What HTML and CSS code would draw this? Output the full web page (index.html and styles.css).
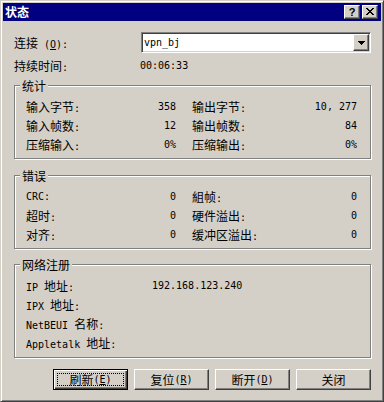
FILE: index.html
```html
<!DOCTYPE html>
<html lang="zh-CN">
<head>
<meta charset="utf-8">
<title>状态</title>
<link rel="stylesheet" href="styles.css">
</head>
<body>
<div class="window">
  <div class="titlebar">
    <span class="title">状态</span>
    <div class="tbtns">
      <span class="tbtn raised help">?</span>
      <span class="tbtn raised close">
        <svg width="8" height="7" viewBox="0 0 8 7" shape-rendering="crispEdges">
          <path d="M0 0h2v1H0zM6 0h2v1H6zM1 1h2v1H1zM5 1h2v1H5zM2 2h4v1H2zM3 3h2v1H3zM2 4h4v1H2zM1 5h2v1H1zM5 5h2v1H5zM0 6h2v1H0zM6 6h2v1H6z" fill="#000"/>
        </svg>
      </span>
    </div>
  </div>
  <div class="content">
    <div class="row conn">
      <span class="lbl">连接<span class="a"> (<u>O</u>):</span></span>
      <div class="combo">
        <span class="combo-text a">vpn_bj</span>
        <span class="drop raised">
          <svg width="7" height="4" viewBox="0 0 7 4" shape-rendering="crispEdges">
            <path d="M0 0h7v1H0zM1 1h5v1H1zM2 2h3v1H2zM3 3h1v1H3z" fill="#000"/>
          </svg>
        </span>
      </div>
    </div>
    <div class="row dur">
      <span class="lbl lbl-dur">持续时间<span class="a">:</span></span>
      <span class="a">00:06:33</span>
    </div>

    <fieldset class="group g1">
      <legend>统计</legend>
      <div class="grid">
        <div class="cell"><span>输入字节<span class="a">:</span></span><span class="a">358</span></div>
        <div class="cell"><span>输出字节<span class="a">:</span></span><span class="a">10, 277</span></div>
        <div class="cell"><span>输入帧数<span class="a">:</span></span><span class="a">12</span></div>
        <div class="cell"><span>输出帧数<span class="a">:</span></span><span class="a">84</span></div>
        <div class="cell"><span>压缩输入<span class="a">:</span></span><span class="a">0%</span></div>
        <div class="cell"><span>压缩输出<span class="a">:</span></span><span class="a">0%</span></div>
      </div>
    </fieldset>

    <fieldset class="group g2">
      <legend>错误</legend>
      <div class="grid">
        <div class="cell"><span class="a">CRC:</span><span class="a">0</span></div>
        <div class="cell"><span>組帧<span class="a">:</span></span><span class="a">0</span></div>
        <div class="cell"><span>超时<span class="a">:</span></span><span class="a">0</span></div>
        <div class="cell"><span>硬件溢出<span class="a">:</span></span><span class="a">0</span></div>
        <div class="cell"><span>对齐<span class="a">:</span></span><span class="a">0</span></div>
        <div class="cell"><span>缓冲区溢出<span class="a">:</span></span><span class="a">0</span></div>
      </div>
    </fieldset>

    <fieldset class="group g3">
      <legend>网络注册</legend>
      <div class="net">
        <div class="nrow"><span class="nlbl"><span class="a">IP </span>地址<span class="a">:</span></span><span class="a">192.168.123.240</span></div>
        <div class="nrow"><span class="nlbl"><span class="a">IPX </span>地址<span class="a">:</span></span></div>
        <div class="nrow"><span class="nlbl"><span class="a">NetBEUI </span>名称<span class="a">:</span></span></div>
        <div class="nrow"><span class="nlbl"><span class="a">Appletalk </span>地址<span class="a">:</span></span></div>
      </div>
    </fieldset>

    <div class="buttons">
      <span class="btn default"><span class="focus">刷新<span class="a"> (<u>E</u>)</span></span></span>
      <span class="btn raised">复位<span class="a"> (<u>R</u>)</span></span>
      <span class="btn raised">断开<span class="a"> (<u>D</u>)</span></span>
      <span class="btn raised">关闭</span>
    </div>
  </div>
</div>
</body>
</html>
```
FILE: styles.css
```css
html, body {
  margin: 0;
  padding: 0;
}
body {
  width: 384px;
  height: 402px;
  background: #d4d0c8;
  font-family: "Noto Sans CJK SC", sans-serif;
  font-size: 12px;
  color: #000;
}
.a {
  font-family: "DejaVu Sans Mono", monospace;
  font-size: 10px;
}
.window {
  box-sizing: border-box;
  width: 384px;
  height: 402px;
  border: 1px solid;
  border-color: #d4d0c8 #404040 #404040 #d4d0c8;
  box-shadow: inset 1px 1px #fff, inset -1px -1px #808080;
  padding: 2px;
  display: flex;
  flex-direction: column;
  background: #d4d0c8;
}
.raised {
  box-sizing: border-box;
  background: #d4d0c8;
  border: 1px solid;
  border-color: #fff #404040 #404040 #fff;
  box-shadow: inset -1px -1px #808080;
}
.titlebar {
  height: 18px;
  background: #000080;
  display: flex;
  align-items: center;
  justify-content: space-between;
  padding: 0 3px 0 2px;
}
.title {
  color: #fff;
  font-weight: bold;
  line-height: 18px;
}
.tbtns {
  display: flex;
  gap: 2px;
}
.tbtn {
  width: 16px;
  height: 14px;
  display: flex;
  align-items: center;
  justify-content: center;
}
.help {
  font-family: "Liberation Sans", sans-serif;
  font-weight: bold;
  font-size: 11px;
  line-height: 12px;
}
.close svg {
  margin-top: -1px;
}
.content {
  flex: 1;
  padding: 0 10px 0 11px;
  display: flex;
  flex-direction: column;
}
.row {
  display: flex;
  align-items: center;
}
.conn {
  margin-top: 11px;
  height: 21px;
}
.lbl {
  width: 127px;
  flex: none;
}
.lbl-dur {
  width: 126px;
}
.dur {
  margin-top: 3px;
  height: 19px;
}
.combo {
  box-sizing: border-box;
  width: 230px;
  height: 21px;
  border: 1px solid;
  border-color: #808080 #fff #fff #808080;
  box-shadow: inset 1px 1px #404040, inset -1px -1px #d4d0c8;
  background: #fff;
  padding: 1px;
  display: flex;
}
.combo-text {
  flex: 1;
  padding: 1px 0 0 1px;
  line-height: 16px;
}
.drop {
  width: 16px;
  height: 17px;
  display: flex;
  align-items: center;
  justify-content: center;
}
.group {
  margin: 4px 0 0;
  padding: 0;
  min-width: 0;
  border: 1px solid #808080;
  box-shadow: 1px 1px #fff, inset 1px 1px #fff;
}
.group legend {
  margin-left: 5px;
  padding: 0 2px;
  line-height: 13px;
  background: #d4d0c8;
}
.g2 {
  margin-top: 10px;
}
.g3 {
  margin-top: 9px;
}
.grid {
  display: grid;
  grid-template-columns: 150px 165px;
  column-gap: 16px;
  grid-auto-rows: 19px;
  padding: 5px 13px 4px 11px;
}
.cell {
  display: flex;
  justify-content: space-between;
  align-items: center;
}
.net {
  padding: 5px 13px 5px 11px;
}
.nrow {
  height: 19px;
  display: flex;
  align-items: center;
}
.nlbl {
  width: 126px;
  flex: none;
}
.buttons {
  margin-top: 11px;
  display: flex;
  justify-content: flex-end;
  gap: 6px;
}
.btn {
  width: 75px;
  height: 21px;
  display: flex;
  align-items: center;
  justify-content: center;
  line-height: 17px;
}
.btn.default {
  box-sizing: border-box;
  border: 1px solid #000;
  box-shadow: inset 1px 1px #fff, inset -1px -1px #404040, inset -2px -2px #808080;
  padding: 3px;
}
.focus {
  flex: 1;
  align-self: stretch;
  display: flex;
  align-items: center;
  justify-content: center;
  border: 1px dotted #000;
}
u {
  text-decoration: underline;
}
```
